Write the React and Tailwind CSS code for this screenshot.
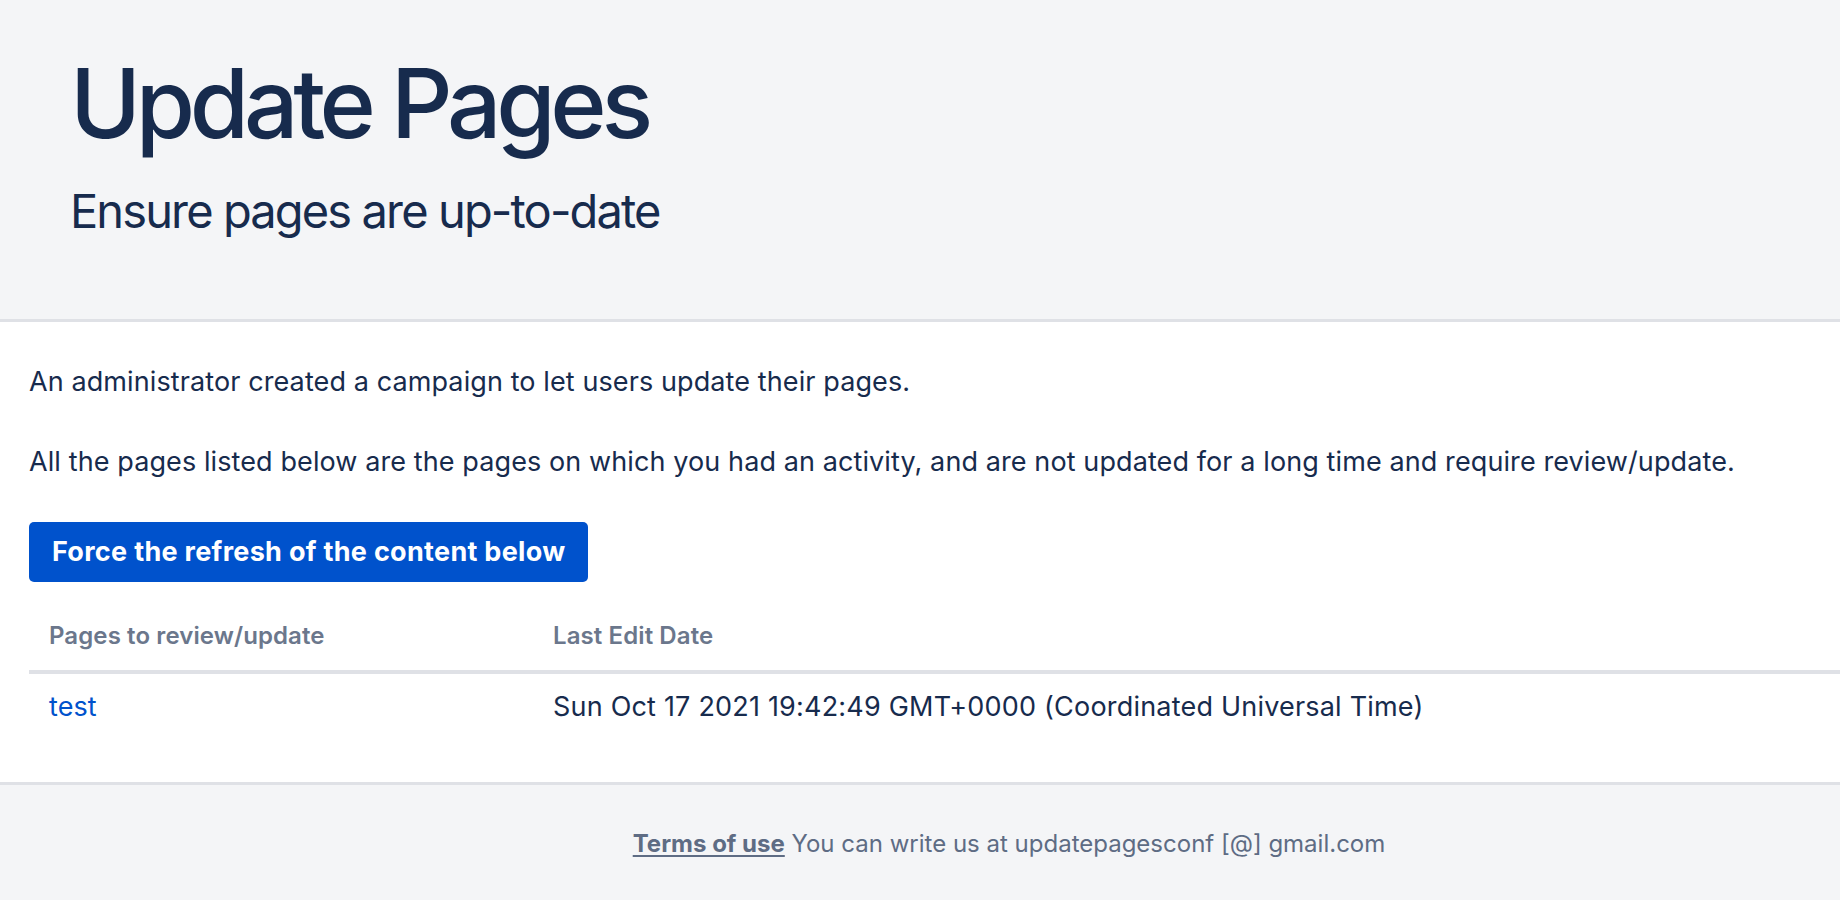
import React from "react";

const pages = [
  { title: "test", lastEdit: "Sun Oct 17 2021 19:42:49 GMT+0000 (Coordinated Universal Time)" },
];

function App() {
  return (
    <div className="min-h-screen bg-white text-[#172b4d] font-['Inter',_'Liberation_Sans',_sans-serif]">
      {/* Page header */}
      <header className="h-[322px] bg-[#f4f5f7] border-b-[3px] border-[#dfe1e6] pl-[70px] pt-[48px]">
        <h1 className="text-[96px] leading-[110px] font-medium tracking-[-0.055em]">Update Pages</h1>
        <p className="mt-[25px] text-[47px] leading-[56px] font-normal tracking-[-0.04em]">Ensure pages are up-to-date</p>
      </header>

      {/* Main content */}
      <main className="px-[29px] pt-[40px] pb-[42px] border-b-[3px] border-[#dfe1e6] tracking-[0.1px]">
        <p className="text-[27px] leading-[40px]">An administrator created a campaign to let users update their pages.</p>
        <p className="mt-[40px] text-[27px] leading-[40px]">
          All the pages listed below are the pages on which you had an activity, and are not updated for a long time and require review/update.
        </p>
        <button className="mt-[40px] h-[60px] px-[23px] rounded-[5px] bg-[#0052cc] text-white text-[27px] leading-[40px] font-bold tracking-[0.3px]">
          Force the refresh of the content below
        </button>

        <table className="mt-[14px] w-[calc(100%+29px)] border-collapse">
          <thead>
            <tr className="border-b-4 border-[#dfe1e6]">
              <th className="w-[504px] pl-[20px] pt-[24px] pb-[18px] text-left text-[24px] leading-[32px] font-semibold text-[#6b778c]">
                Pages to review/update
              </th>
              <th className="pl-[20px] pt-[24px] pb-[18px] text-left text-[24px] leading-[32px] font-semibold text-[#6b778c]">
                Last Edit Date
              </th>
            </tr>
          </thead>
          <tbody>
            {pages.map((page) => (
              <tr key={page.title}>
                <td className="pl-[20px] pt-[13px] pb-[13px] text-[27px] leading-[40px]">
                  <a href="#" className="text-[#0052cc]">{page.title}</a>
                </td>
                <td className="pl-[20px] pt-[13px] pb-[13px] text-[27px] leading-[40px] tracking-[0.2px]">{page.lastEdit}</td>
              </tr>
            ))}
          </tbody>
        </table>
      </main>

      {/* Footer */}
      <footer className="h-[115px] bg-[#f4f5f7] pt-[43px] pl-[178px] flex justify-center">
        <p className="text-[24px] leading-[32px] text-[#5e6c84]">
          <a href="#" className="font-bold underline underline-offset-[3px] decoration-2">Terms of use</a>{" "}
          You can write us at updatepagesconf [@] gmail.com
        </p>
      </footer>
    </div>
  );
}

export default App;
